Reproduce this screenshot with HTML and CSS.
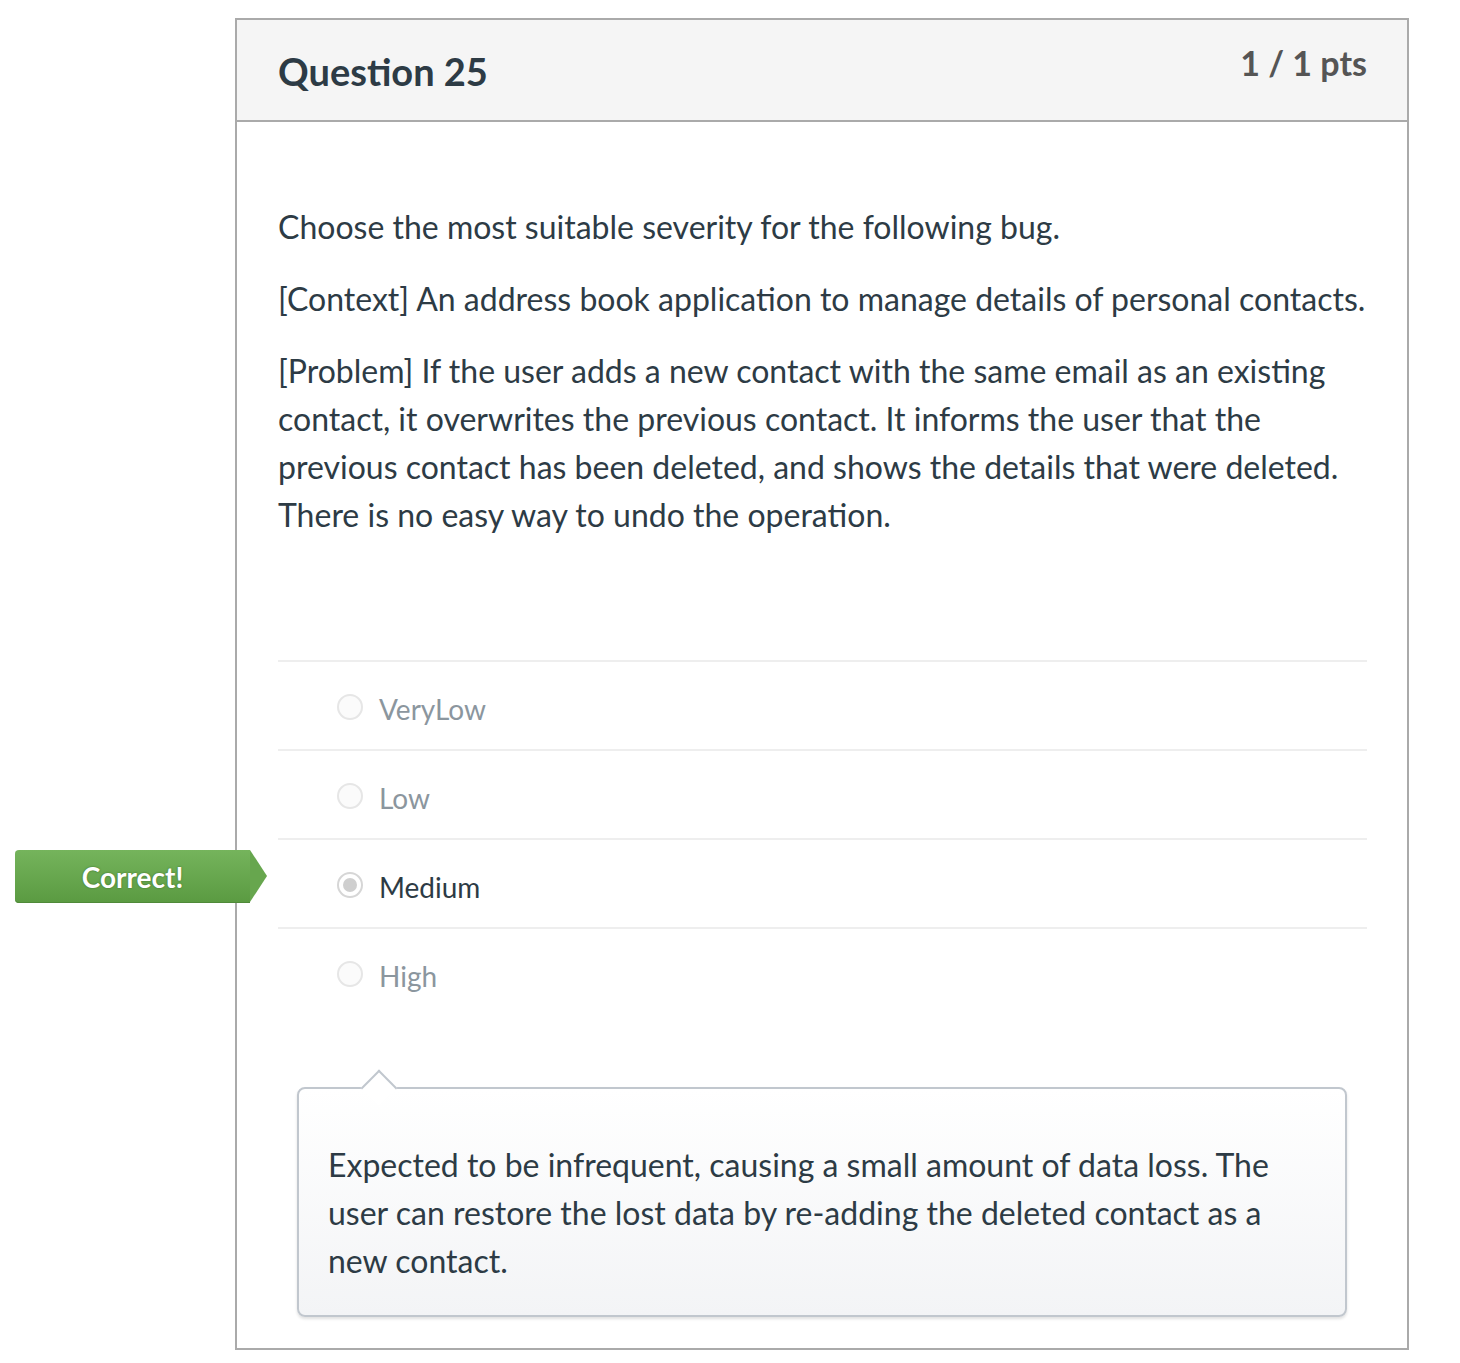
FILE: index.html
```html
<!DOCTYPE html>
<html>
<head>
<meta charset="utf-8">
<link rel="stylesheet" href="styles.css">
</head>
<body>
<div class="page">
  <div class="question">
    <div class="header">
      <h2 class="title">Question 25</h2>
      <div class="pts">1 / 1 pts</div>
    </div>
    <div class="qbody">
      <div class="qtext">
        <p>Choose the most suitable severity for the following bug.</p>
        <p>[Context] An address book application to manage details of personal contacts.</p>
        <p>[Problem] If the user adds a new contact with the same email as an existing contact, it overwrites the previous contact. It informs the user that the previous contact has been deleted, and shows the details that were deleted. There is no easy way to undo the operation.</p>
      </div>
      <div class="answers">
        <div class="answer"><span class="radio"></span><span class="label">VeryLow</span></div>
        <div class="answer"><span class="radio"></span><span class="label">Low</span></div>
        <div class="answer selected"><span class="tag">Correct!</span><span class="radio"></span><span class="label">Medium</span></div>
        <div class="answer"><span class="radio"></span><span class="label">High</span></div>
      </div>
      <div class="comment">
        <p>Expected to be infrequent, causing a small amount of data loss. The user can restore the lost data by re-adding the deleted contact as a new contact.</p>
      </div>
    </div>
  </div>
</div>
</body>
</html>
```
FILE: styles.css
```css
html, body { margin: 0; padding: 0; background: #fff; }
body { font-family: Lato, "Open Sans", sans-serif; color: #2d3b45; }
.page { padding: 18px 0 0 235px; width: 1174px; }
.question { border: 2px solid #aaa; width: 1170px; }
.header {
  background: #f5f5f5;
  border-bottom: 2px solid #aaa;
  height: 100px;
  display: flex;
  justify-content: space-between;
  padding: 0 40px 0 41px;
}
.title { margin: 0; padding-top: 27px; font-size: 38px; font-weight: 700; line-height: 48px; color: #2d3b45; }
.pts { padding-top: 23px; font-size: 34px; font-weight: 700; color: #555; line-height: 40px; }
.qbody { padding: 81px 40px 31px 41px; }
.qtext p { margin: 0 0 24px; font-size: 32px; line-height: 48px; }
.qtext { margin-bottom: 121px; }
.answer {
  position: relative;
  border-top: 2px solid #eee;
  height: 80px;
  padding-top: 7px;
  display: flex;
  align-items: center;
  padding-left: 59px;
  font-size: 28px;
  color: #8b969e;
}
.radio {
  width: 22px; height: 22px;
  border: 2px solid #e6e6e6;
  border-radius: 50%;
  background: #fbfbfb;
  margin-right: 16px;
  margin-top: -5px;
  position: relative;
}
.selected { color: #2d3b45; }
.selected .radio { border-color: #d6d6d6; background: #fff; }
.selected .radio::after {
  content: ""; position: absolute; left: 4px; top: 4px; width: 14px; height: 14px; border-radius: 50%; background: #cfcfcf;
}
.tag {
  position: absolute;
  left: -263px; top: 10px;
  width: 235px; height: 53px;
  background: linear-gradient(#75b45c, #5a9a41);
  color: #fff; font-weight: 700; font-size: 28px;
  display: flex; align-items: center; justify-content: center;
  border-radius: 4px 0 0 4px;
  text-shadow: 0 0 2px #3a6b25;
  box-shadow: inset 0 -1px 0 #4f8a39;
}
.tag::after {
  content: ""; position: absolute; right: -17px; top: 0;
  border-left: 17px solid #67a64e; border-top: 26.5px solid transparent; border-bottom: 26.5px solid transparent;
}
.comment {
  position: relative;
  margin: 71px 20px 0 19px;
  border: 2px solid #c1c7ce;
  border-radius: 8px;
  background: linear-gradient(#fff, #f3f4f6);
  box-shadow: 0 2px 3px rgba(0,0,0,0.12);
  padding: 52px 30px 30px 29px;
}
.comment::before {
  content: ""; position: absolute; left: 67px; top: -14px;
  width: 24px; height: 24px; background: #fff;
  border-left: 2px solid #c1c7ce; border-top: 2px solid #c1c7ce;
  transform: rotate(45deg);
}
.comment p { margin: 0; font-size: 32px; line-height: 48px; position: relative; }
```
